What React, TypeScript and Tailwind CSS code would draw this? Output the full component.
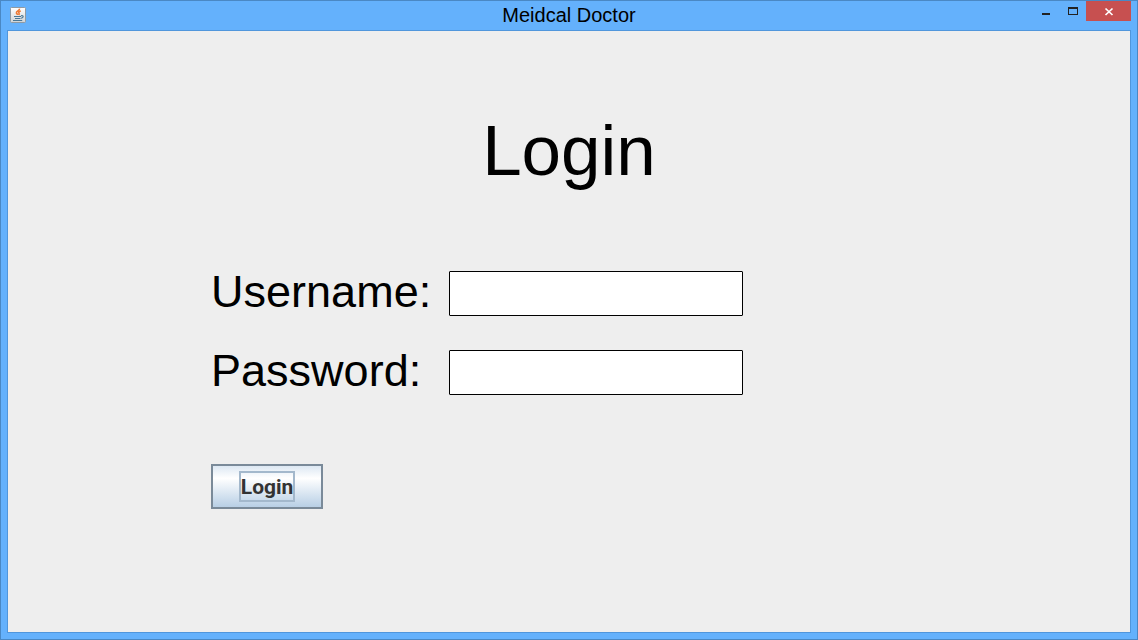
import React from "react";

function JavaIcon() {
  return (
    <svg width="16" height="16" viewBox="0 0 16 16" aria-hidden="true">
      <defs>
        <linearGradient id="tile" x1="0" y1="0" x2="0" y2="1">
          <stop offset="0" stopColor="#ffffff" />
          <stop offset="1" stopColor="#cfd3d6" />
        </linearGradient>
      </defs>
      <rect x="0.5" y="0.5" width="15" height="15" rx="1" fill="url(#tile)" stroke="#8f9aa3" />
      <path d="M9.5 1.6C9.8 3.6 6.2 4 6.4 5.8C6.5 6.8 7.6 7 7.6 8M10.8 4C8.8 4.4 8.4 5.4 9 6.2C9.4 6.8 9.2 7.4 8.8 8" fill="none" stroke="#ee7a35" strokeWidth="1.6" />
      <path d="M4 9.5H11M5 11.5H10.5M3 13.5H12.2" fill="none" stroke="#4a7795" strokeWidth="1.1" />
      <path d="M11 8.8C13.8 8 14 10.6 11 11.3" fill="none" stroke="#4a7795" strokeWidth="1.1" />
    </svg>
  );
}

function TitleBar() {
  return (
    <header className="grid h-[29px] shrink-0 grid-cols-[1fr_auto_1fr] items-start">
      <div className="pt-[6px] pl-[9px]">
        <JavaIcon />
      </div>
      <div className="text-[20px] leading-[28px]">Meidcal Doctor</div>
      <div className="flex justify-end pr-[6px]">
        <button type="button" aria-label="Minimize" className="flex h-5 w-[27px] items-center justify-center">
          <svg width="27" height="20" viewBox="0 0 27 20" shapeRendering="crispEdges">
            <rect x="10" y="12" width="8" height="2" fill="#222222" />
          </svg>
        </button>
        <button type="button" aria-label="Maximize" className="flex h-5 w-[27px] items-center justify-center">
          <svg width="27" height="20" viewBox="0 0 27 20" shapeRendering="crispEdges">
            <path d="M9 6h10v8H9zM10 8v5h8V8z" fill="#222222" fillRule="evenodd" />
          </svg>
        </button>
        <button type="button" aria-label="Close" className="flex h-5 w-[45px] items-center justify-center bg-[#c75050]">
          <svg width="45" height="20" viewBox="0 0 45 20">
            <path d="M19.5 7.5l7 6.5M26.5 7.5l-7 6.5" stroke="#ffffff" strokeWidth="1.7" />
          </svg>
        </button>
      </div>
    </header>
  );
}

function Field({ id, label, type }: { id: string; label: string; type: string }) {
  return (
    <>
      <label htmlFor={id} className="text-[45px] leading-[42px]">
        {label}
      </label>
      <input
        id={id}
        type={type}
        className="h-[45px] w-full rounded-[1px] border border-black bg-white px-2 text-[28px] outline-none"
      />
    </>
  );
}

export default function App() {
  return (
    <div className="flex min-h-screen flex-col border border-[#4a88c4] bg-[#64b1fc] font-['Liberation_Sans',Arial,sans-serif] text-black">
      <TitleBar />
      <main className="mx-[6px] mb-[6px] grow border border-[#5096dc] bg-[#eeeeee] pt-[84px]">
        <h1 className="text-center text-[71px] leading-[72px]">Login</h1>
        <form className="mt-[84px] pl-[18.1%]" onSubmit={(event) => event.preventDefault()}>
          <div className="grid grid-cols-[238px_minmax(0,294px)] items-start gap-y-[34px]">
            <Field id="username" label="Username:" type="text" />
            <Field id="password" label="Password:" type="password" />
          </div>
          <button
            type="submit"
            className="mt-[69px] flex h-[45px] w-28 items-center justify-center border-2 border-[#7a8a99] bg-linear-to-b from-[#dde8f3] via-white via-30% to-[#b8cfe5] font-['Roboto',sans-serif] text-[21px] leading-[25px] font-bold text-[#333333]"
          >
            <span className="border-2 border-[#a3b8cc] pt-[2px]">Login</span>
          </button>
        </form>
      </main>
    </div>
  );
}
